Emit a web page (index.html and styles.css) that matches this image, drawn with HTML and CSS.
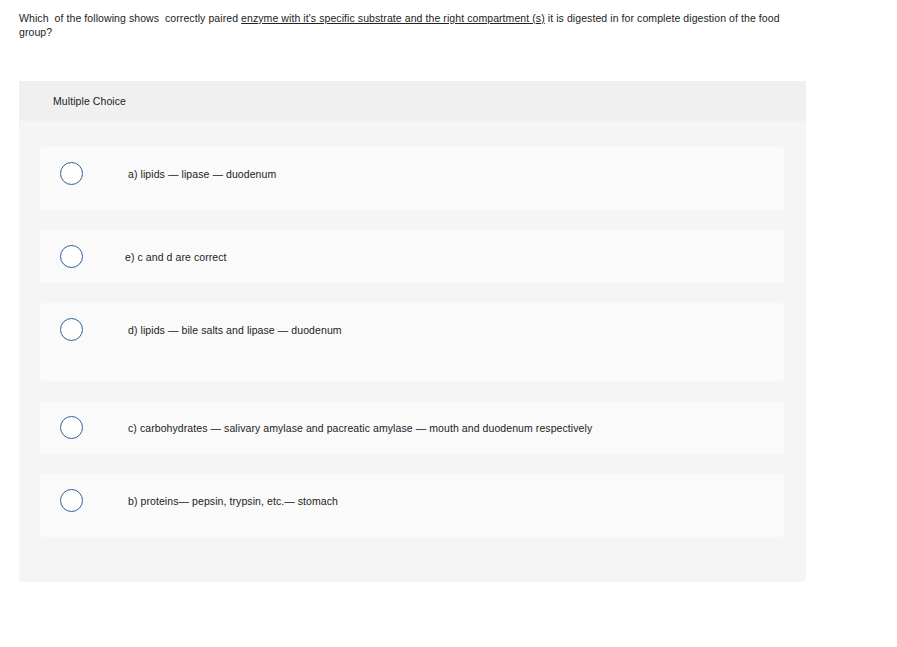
FILE: index.html
```html
<!DOCTYPE html>
<html>
<head>
<title>Multiple Choice</title>
<link rel="stylesheet" href="styles.css">
</head>
<body>

<div class="page">
    <div class="question">
        Which &nbsp;of the following shows &nbsp;correctly paired <u>enzyme with it's specific substrate and the right compartment (s)</u> it is digested in for complete digestion of the food<br>group?
    </div>

    <div class="panel">
        <div class="panel-head">Multiple Choice</div>
        <div class="panel-body">
            <div class="choice tall">
                <span class="radio"></span>
                <span class="label">&nbsp;a) lipids — lipase — duodenum</span>
            </div>
            <div class="choice">
                <span class="radio"></span>
                <span class="label">e) c and d are correct</span>
            </div>
            <div class="choice taller">
                <span class="radio"></span>
                <span class="label">&nbsp;d) lipids — bile salts and lipase — duodenum</span>
            </div>
            <div class="choice">
                <span class="radio"></span>
                <span class="label">&nbsp;c) carbohydrates — salivary amylase and pacreatic amylase — mouth and duodenum respectively</span>
            </div>
            <div class="choice tall">
                <span class="radio"></span>
                <span class="label">&nbsp;b) proteins— pepsin, trypsin, etc.— stomach</span>
            </div>
        </div>
    </div>
</div>

</body>
</html>
```

FILE: styles.css
```css
body {
    margin: 0;
    font-family: "Liberation Sans", Arial, sans-serif;
    font-size: 10.5px;
    letter-spacing: 0.08px;
    color: #222;
    background: #fff;
}
.page {
    padding: 11px 19px;
}
.question {
    width: 787px;
    line-height: 14px;
}
.question u {
    text-decoration: underline;
}
.panel {
    width: 787px;
    margin-top: 42px;
    background: #f5f5f5;
    border-radius: 2px;
}
.panel-head {
    height: 40px;
    display: flex;
    align-items: center;
    padding-left: 34px;
    background: #f0f0f0;
    border-radius: 2px 2px 0 0;
}
.panel-body {
    display: flex;
    flex-direction: column;
    gap: 20px;
    padding: 26px 22px 45px 21px;
}
.choice {
    display: flex;
    align-items: center;
    padding: 15px 20px;
    background: #fafafa;
    border-radius: 3px;
}
.choice.tall {
    padding-bottom: 25px;
}
.choice.taller {
    padding-bottom: 40px;
}
.radio {
    box-sizing: border-box;
    width: 23px;
    height: 23px;
    border: 1.5px solid #2d6299;
    border-radius: 50%;
    background: #fff;
    flex-shrink: 0;
}
.label {
    margin-left: 42px;
}
```
